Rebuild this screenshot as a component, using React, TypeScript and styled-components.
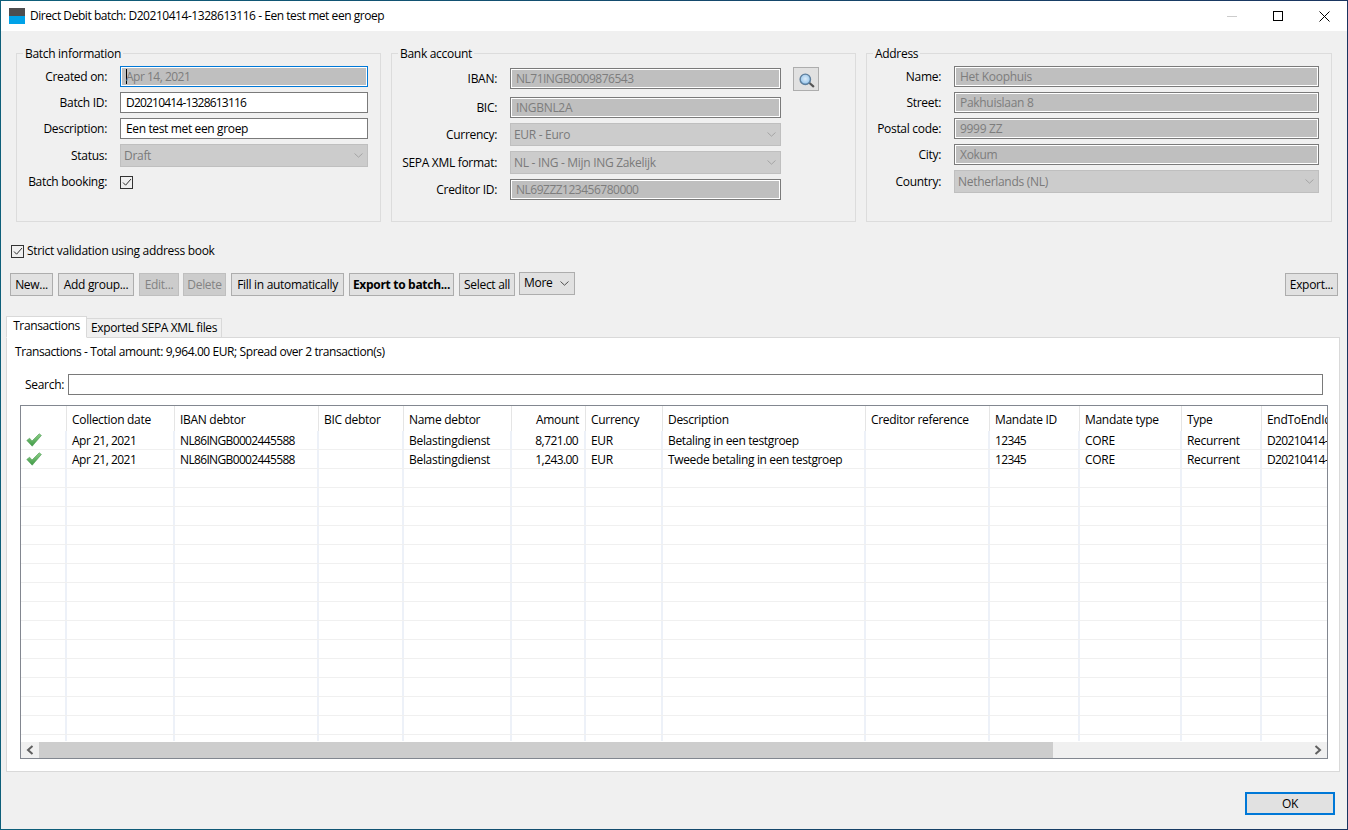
import React from 'react';
import styled, { createGlobalStyle, css } from 'styled-components';

const GlobalStyle = createGlobalStyle`
    html, body {
        margin: 0;
        padding: 0;
        height: 100%;
        overflow: hidden;
    }
    #root {
        height: 100%;
    }
    * {
        box-sizing: border-box;
    }
`;

const Win = styled.div`
    display: flex;
    flex-direction: column;
    width: 1348px;
    height: 830px;
    border: 1px solid;
    border-image: linear-gradient(to right, #0e5f7a, #1a3560) 1;
    background: #f0f0f0;
    color: #000;
    font-family: "Open Sans", "Liberation Sans", sans-serif;
    font-size: 12px;
    letter-spacing: -0.3px;
    line-height: 16px;
`;

const TitleBar = styled.div`
    display: flex;
    align-items: center;
    flex: none;
    height: 30px;
    padding-left: 8px;
    background: #fff;
`;
const AppIcon = styled.div`
    width: 16px;
    height: 16px;
    margin-right: 5px;
    background: linear-gradient(to bottom, #4d4d4f 0, #4d4d4f 8px, #00a2e8 8px);
`;
const Title = styled.div`
    flex: 1;
    letter-spacing: -0.45px;
`;
const WinButton = styled.div`
    display: flex;
    align-items: center;
    justify-content: center;
    width: 46px;
    height: 30px;
`;

const Groups = styled.div`
    display: flex;
    flex: none;
    gap: 10px;
    height: 176px;
    margin: 15px 15px 0;
`;
const Group = styled.fieldset<{ $w: number }>`
    width: ${({ $w }) => $w}px;
    margin: 0;
    padding: 6px 0 0;
    border: 1px solid #dcdcdc;
    min-width: 0;
`;
const GroupTitle = styled.legend`
    margin-left: 6px;
    padding: 0 2px;
    height: 14px;
`;
const Form = styled.div<{ $top?: number }>`
    display: flex;
    flex-direction: column;
    gap: 5px;
    margin-top: ${({ $top }) => $top ?? 0}px;
`;
const Row = styled.div<{ $label: number; $tall?: boolean }>`
    display: grid;
    grid-template-columns: ${({ $label }) => $label}px auto auto 1fr;
    column-gap: 13px;
    align-items: center;
    ${({ $tall }) => $tall && css`
        height: 25px;
        align-items: start;
    `}
`;
const Label = styled.div<{ $offset?: boolean }>`
    text-align: right;
    white-space: nowrap;
    ${({ $offset }) => $offset && 'padding-top: 4px;'}
`;
const Field = styled.div<{ $w: number; $disabled?: boolean; $focus?: boolean; $offset?: boolean; $spacing?: number }>`
    display: flex;
    align-items: center;
    width: ${({ $w }) => $w}px;
    height: 21px;
    padding: 0 5px;
    border: 1px solid #7a7a7a;
    background: #fff;
    white-space: nowrap;
    ${({ $spacing }) => $spacing !== undefined && `letter-spacing: ${$spacing}px;`}
    ${({ $disabled }) => $disabled && css`
        background: #bfbfbf;
        color: #7d7d7d;
        box-shadow: inset 0 0 0 1px #fff;
    `}
    ${({ $focus }) => $focus && css`
        border-color: #0078d7;
        &::before {
            content: '';
            width: 1px;
            height: 15px;
            margin-right: -1px;
            background: #000;
        }
    `}
    ${({ $offset }) => $offset && 'margin-top: 1px;'}
`;
const Select = styled.div<{ $w: number }>`
    display: flex;
    align-items: center;
    justify-content: space-between;
    width: ${({ $w }) => $w}px;
    height: 23px;
    padding: 0 4px 0 3px;
    border: 1px solid #bfbfbf;
    background: #ccc;
    color: #7a7a7a;
    white-space: nowrap;
`;
const LookupButton = styled.div`
    display: flex;
    align-items: center;
    justify-content: center;
    width: 26px;
    height: 24px;
    margin-left: -1px;
    padding: 2px 0 0 1px;
    border: 1px solid #adadad;
    background: #e1e1e1;
`;
const CheckBoxBox = styled.div`
    display: flex;
    align-items: center;
    justify-content: center;
    flex: none;
    width: 13px;
    height: 13px;
    border: 1px solid #333;
    background: #f0f0f0;
`;
const BookingRow = styled(Row)`
    margin-top: 2px;
`;
const Strict = styled.div`
    display: flex;
    flex: none;
    align-items: center;
    gap: 3px;
    height: 16px;
    margin: 21px 0 0 10px;
`;

const Toolbar = styled.div`
    display: flex;
    flex: none;
    align-items: flex-start;
    height: 24px;
    margin: 13px 9px 0 9px;
`;
const Button = styled.div<{ $w: number; $gap: number; $disabled?: boolean; $bold?: boolean }>`
    display: flex;
    align-items: center;
    justify-content: center;
    width: ${({ $w }) => $w}px;
    height: 23px;
    margin: 1px ${({ $gap }) => $gap}px 0 0;
    border: 1px solid #adadad;
    background: #e1e1e1;
    white-space: nowrap;
    ${({ $disabled }) => $disabled && css`
        border-color: #bfbfbf;
        background: #ccc;
        color: #838383;
    `}
    ${({ $bold }) => $bold && 'font-weight: 700;'}
`;
const MoreButton = styled.div`
    display: flex;
    align-items: center;
    justify-content: space-between;
    width: 56px;
    height: 23px;
    padding: 0 5px 1px 4px;
    border: 1px solid #adadad;
    background: #e1e1e1;
`;
const Spacer = styled.div`
    flex: 1;
`;

const Tabs = styled.div`
    position: relative;
    z-index: 1;
    display: flex;
    flex: none;
    align-items: flex-end;
    height: 22px;
    margin: 20px 0 -1px 5px;
`;
const Tab = styled.div<{ $active?: boolean }>`
    display: flex;
    align-items: center;
    justify-content: center;
    height: ${({ $active }) => ($active ? 22 : 20)}px;
    width: ${({ $active }) => ($active ? 81 : 135)}px;
    border: 1px solid #d9d9d9;
    border-left-width: ${({ $active }) => ($active ? 1 : 0)}px;
    background: ${({ $active }) => ($active ? '#fff' : '#f0f0f0')};
    letter-spacing: -0.38px;
    ${({ $active }) => $active && 'border-bottom-color: #fff; padding-bottom: 3px;'}
`;
const Panel = styled.div`
    display: flex;
    flex: 1;
    flex-direction: column;
    min-height: 0;
    margin: 0 7px 0 5px;
    padding: 6px 11px 12px 13px;
    border: 1px solid #d9d9d9;
    background: #fff;
`;
const Summary = styled.div`
    height: 16px;
    margin-left: -5px;
    letter-spacing: -0.41px;
`;
const SearchRow = styled.div`
    display: flex;
    flex: none;
    align-items: center;
    gap: 4px;
    height: 21px;
    margin: 14px 5px 0 5px;
`;
const SearchInput = styled.div`
    flex: 1;
    height: 21px;
    border: 1px solid #7a7a7a;
`;

const Table = styled.div`
    display: flex;
    flex: 1;
    flex-direction: column;
    min-height: 0;
    margin-top: 10px;
    border: 1px solid #828790;
    overflow: hidden;
`;
const TableRow = styled.div<{ $header?: boolean }>`
    display: grid;
    flex: none;
    grid-template-columns: 46px 108px 144px 85px 108px 74px 77px 203px 124px 90px 102px 80px 200px;
    width: 1441px;
    height: ${({ $header }) => ($header ? 25 : 19)}px;
    ${({ $header }) => !$header && 'border-bottom: 1px solid #f0f0f0;'}
`;
const HeaderCell = styled.div<{ $right?: boolean }>`
    display: flex;
    align-items: center;
    justify-content: ${({ $right }) => ($right ? 'flex-end' : 'flex-start')};
    padding: 3px 6px 0 5px;
    border-right: 1px solid #e5e5e5;
    white-space: nowrap;
    overflow: hidden;
`;
const Cell = styled.div<{ $right?: boolean; $spacing?: number }>`
    display: flex;
    align-items: center;
    justify-content: ${({ $right }) => ($right ? 'flex-end' : 'flex-start')};
    padding: 2px 6px 0 5px;
    border-right: 2px solid #edf1f8;
    white-space: nowrap;
    overflow: hidden;
    ${({ $spacing }) => $spacing !== undefined && `letter-spacing: ${$spacing}px;`}
`;
const IconCell = styled(Cell)`
    padding: 0 0 1px 5px;
`;
const TableBody = styled.div`
    flex: 1;
    min-height: 0;
    margin-bottom: 1px;
    overflow: hidden;
`;
const ScrollBar = styled.div`
    display: flex;
    flex: none;
    align-items: stretch;
    height: 16px;
    background: #f0f0f0;
`;
const ScrollArrow = styled.div`
    display: flex;
    align-items: center;
    justify-content: center;
    flex: none;
    width: 18px;
`;
const ScrollThumb = styled.div`
    width: 1014px;
    background: #cdcdcd;
`;
const Footer = styled.div`
    display: flex;
    flex: none;
    justify-content: flex-end;
    height: 57px;
    padding: 20px 12px 0 0;
`;
const OkButton = styled.div`
    display: flex;
    align-items: center;
    justify-content: center;
    width: 90px;
    height: 23px;
    border: 2px solid #0078d7;
    background: #e1e1e1;
`;

const Chevron = ({ color = '#a6a6a6' }: { color?: string }) => (
    <svg width="9" height="5" viewBox="0 0 9 5" fill="none">
        <path d="M0.5 0.5 L4.5 4.2 L8.5 0.5" stroke={color} strokeWidth="1" />
    </svg>
);

const Tick = () => (
    <svg width="10" height="9" viewBox="0 0 10 9" fill="none">
        <path d="M1 4.5 L3.6 7.2 L9 1" stroke="#333" strokeWidth="1" />
    </svg>
);

const CheckBox = () => (
    <CheckBoxBox>
        <Tick />
    </CheckBoxBox>
);

const Magnifier = () => (
    <svg width="16" height="15" viewBox="0 0 16 15">
        <defs>
            <radialGradient id="glass" cx="50%" cy="45%" r="60%">
                <stop offset="0" stopColor="#dcecf9" />
                <stop offset="0.65" stopColor="#a9cfee" />
                <stop offset="1" stopColor="#3f86c9" />
            </radialGradient>
        </defs>
        <path d="M10.5 10 L14.3 13.3" stroke="#555" strokeWidth="2.2" strokeLinecap="round" />
        <circle cx="6.3" cy="6.3" r="5.2" fill="url(#glass)" stroke="#5f7f9c" strokeWidth="1.4" />
    </svg>
);

const GreenCheck = () => (
    <svg width="16" height="14" viewBox="0 0 16 14">
        <defs>
            <linearGradient id="tickFill" x1="0" y1="0" x2="0" y2="1">
                <stop offset="0" stopColor="#8ccf86" />
                <stop offset="1" stopColor="#3f9a46" />
            </linearGradient>
        </defs>
        <path
            d="M0.8 7.4 L3.6 5.2 L6 8 L13.2 0.8 L15.4 2.4 L6.2 13.2 Z"
            fill="url(#tickFill)"
            stroke="#4f9a55"
            strokeWidth="0.6"
            strokeLinejoin="round"
        />
    </svg>
);

const columns = [
    { name: '' },
    { name: 'Collection date', spacing: -0.5 },
    { name: 'IBAN debtor', spacing: -0.65 },
    { name: 'BIC debtor' },
    { name: 'Name debtor' },
    { name: 'Amount', right: true, spacing: -0.6 },
    { name: 'Currency' },
    { name: 'Description', spacing: -0.36 },
    { name: 'Creditor reference' },
    { name: 'Mandate ID', spacing: -0.65 },
    { name: 'Mandate type' },
    { name: 'Type' },
    { name: 'EndToEndId', spacing: -0.65 },
];

const transactions = [
    ['', 'Apr 21, 2021', 'NL86INGB0002445588', '', 'Belastingdienst', '8,721.00', 'EUR', 'Betaling in een testgroep', '', '12345', 'CORE', 'Recurrent', 'D20210414-1328613116-1'],
    ['', 'Apr 21, 2021', 'NL86INGB0002445588', '', 'Belastingdienst', '1,243.00', 'EUR', 'Tweede betaling in een testgroep', '', '12345', 'CORE', 'Recurrent', 'D20210414-1328613116-2'],
];

const emptyRows = Array.from({ length: 15 }, (_, i) => i);

const toolbarButtons = [
    { text: 'New...', w: 43, gap: 5 },
    { text: 'Add group...', w: 76, gap: 5 },
    { text: 'Edit...', w: 40, gap: 4 },
    { text: 'Delete', w: 43, gap: 5 },
    { text: 'Fill in automatically', w: 113, gap: 5 },
    { text: 'Export to batch...', w: 105, gap: 5, bold: true },
    { text: 'Select all', w: 56, gap: 4 },
];

const App: React.FC = () => {
    return (
        <>
            <GlobalStyle />
            <Win>
                <TitleBar>
                    <AppIcon />
                    <Title>Direct Debit batch: D20210414-1328613116 - Een test met een groep</Title>
                    <WinButton>
                        <svg width="10" height="10" viewBox="0 0 10 10">
                            <path d="M0 5.5 H10" stroke="#cccccc" strokeWidth="1" />
                        </svg>
                    </WinButton>
                    <WinButton>
                        <svg width="10" height="10" viewBox="0 0 10 10" fill="none">
                            <rect x="0.5" y="0.5" width="9" height="9" stroke="#000" strokeWidth="1" />
                        </svg>
                    </WinButton>
                    <WinButton>
                        <svg width="11" height="11" viewBox="0 0 11 11" fill="none">
                            <path d="M0.5 0.5 L10.5 10.5 M10.5 0.5 L0.5 10.5" stroke="#000" strokeWidth="1" />
                        </svg>
                    </WinButton>
                </TitleBar>

                <Groups>
                    <Group $w={365}>
                        <GroupTitle>Batch information</GroupTitle>
                        <Form>
                            <Row $label={90}>
                                <Label>Created on:</Label>
                                <Field $w={248} $disabled $focus $spacing={-0.5}>Apr 14, 2021</Field>
                            </Row>
                            <Row $label={90}>
                                <Label>Batch ID:</Label>
                                <Field $w={248} $spacing={-0.8}>D20210414-1328613116</Field>
                            </Row>
                            <Row $label={90}>
                                <Label>Description:</Label>
                                <Field $w={248} $spacing={-0.36}>Een test met een groep</Field>
                            </Row>
                            <Row $label={90}>
                                <Label>Status:</Label>
                                <Select $w={248}>Draft<Chevron /></Select>
                            </Row>
                            <BookingRow $label={90}>
                                <Label>Batch booking:</Label>
                                <CheckBox />
                            </BookingRow>
                        </Form>
                    </Group>

                    <Group $w={465}>
                        <GroupTitle>Bank account</GroupTitle>
                        <Form $top={1}>
                            <Row $label={105} $tall>
                                <Label $offset>IBAN:</Label>
                                <Field $w={271} $disabled $offset $spacing={-0.5}>NL71INGB0009876543</Field>
                                <LookupButton><Magnifier /></LookupButton>
                            </Row>
                            <Row $label={105}>
                                <Label>BIC:</Label>
                                <Field $w={271} $disabled>INGBNL2A</Field>
                            </Row>
                            <Row $label={105}>
                                <Label>Currency:</Label>
                                <Select $w={271}>EUR - Euro<Chevron /></Select>
                            </Row>
                            <Row $label={105}>
                                <Label>SEPA XML format:</Label>
                                <Select $w={271}>NL - ING - Mijn ING Zakelijk<Chevron /></Select>
                            </Row>
                            <Row $label={105}>
                                <Label>Creditor ID:</Label>
                                <Field $w={271} $disabled $spacing={-0.5}>NL69ZZZ123456780000</Field>
                            </Row>
                        </Form>
                    </Group>

                    <Group $w={466}>
                        <GroupTitle>Address</GroupTitle>
                        <Form>
                            <Row $label={74}>
                                <Label>Name:</Label>
                                <Field $w={365} $disabled>Het Koophuis</Field>
                            </Row>
                            <Row $label={74}>
                                <Label>Street:</Label>
                                <Field $w={365} $disabled>Pakhuislaan 8</Field>
                            </Row>
                            <Row $label={74}>
                                <Label>Postal code:</Label>
                                <Field $w={365} $disabled>9999 ZZ</Field>
                            </Row>
                            <Row $label={74}>
                                <Label>City:</Label>
                                <Field $w={365} $disabled>Xokum</Field>
                            </Row>
                            <Row $label={74}>
                                <Label>Country:</Label>
                                <Select $w={365}>Netherlands (NL)<Chevron /></Select>
                            </Row>
                        </Form>
                    </Group>
                </Groups>

                <Strict>
                    <CheckBox />
                    Strict validation using address book
                </Strict>

                <Toolbar>
                    {toolbarButtons.map((b) => (
                        <Button
                            key={b.text}
                            $w={b.w}
                            $gap={b.gap}
                            $bold={b.bold}
                            $disabled={b.text === 'Edit...' || b.text === 'Delete'}
                        >
                            {b.text}
                        </Button>
                    ))}
                    <MoreButton>More<Chevron color="#505050" /></MoreButton>
                    <Spacer />
                    <Button $w={53} $gap={0}>Export...</Button>
                </Toolbar>

                <Tabs>
                    <Tab $active>Transactions</Tab>
                    <Tab>Exported SEPA XML files</Tab>
                </Tabs>
                <Panel>
                    <Summary>Transactions - Total amount: 9,964.00 EUR; Spread over 2 transaction(s)</Summary>
                    <SearchRow>
                        Search:
                        <SearchInput />
                    </SearchRow>
                    <Table>
                        <TableRow $header>
                            {columns.map((c) => (
                                <HeaderCell key={c.name} $right={c.right}>{c.name}</HeaderCell>
                            ))}
                        </TableRow>
                        <TableBody>
                            {transactions.map((t, i) => (
                                <TableRow key={i}>
                                    <IconCell><GreenCheck /></IconCell>
                                    {t.slice(1).map((v, j) => (
                                        <Cell key={j} $right={columns[j + 1].right} $spacing={columns[j + 1].spacing}>{v}</Cell>
                                    ))}
                                </TableRow>
                            ))}
                            {emptyRows.map((i) => (
                                <TableRow key={i}>
                                    {columns.map((c) => <Cell key={c.name} />)}
                                </TableRow>
                            ))}
                        </TableBody>
                        <ScrollBar>
                            <ScrollArrow>
                                <svg width="8" height="10" viewBox="0 0 8 10" fill="none">
                                    <path d="M6.5 1 L2 5 L6.5 9" stroke="#606060" strokeWidth="2" />
                                </svg>
                            </ScrollArrow>
                            <ScrollThumb />
                            <Spacer />
                            <ScrollArrow>
                                <svg width="8" height="10" viewBox="0 0 8 10" fill="none">
                                    <path d="M1.5 1 L6 5 L1.5 9" stroke="#606060" strokeWidth="2" />
                                </svg>
                            </ScrollArrow>
                        </ScrollBar>
                    </Table>
                </Panel>
                <Footer>
                    <OkButton>OK</OkButton>
                </Footer>
            </Win>
        </>
    );
};

export default App;
